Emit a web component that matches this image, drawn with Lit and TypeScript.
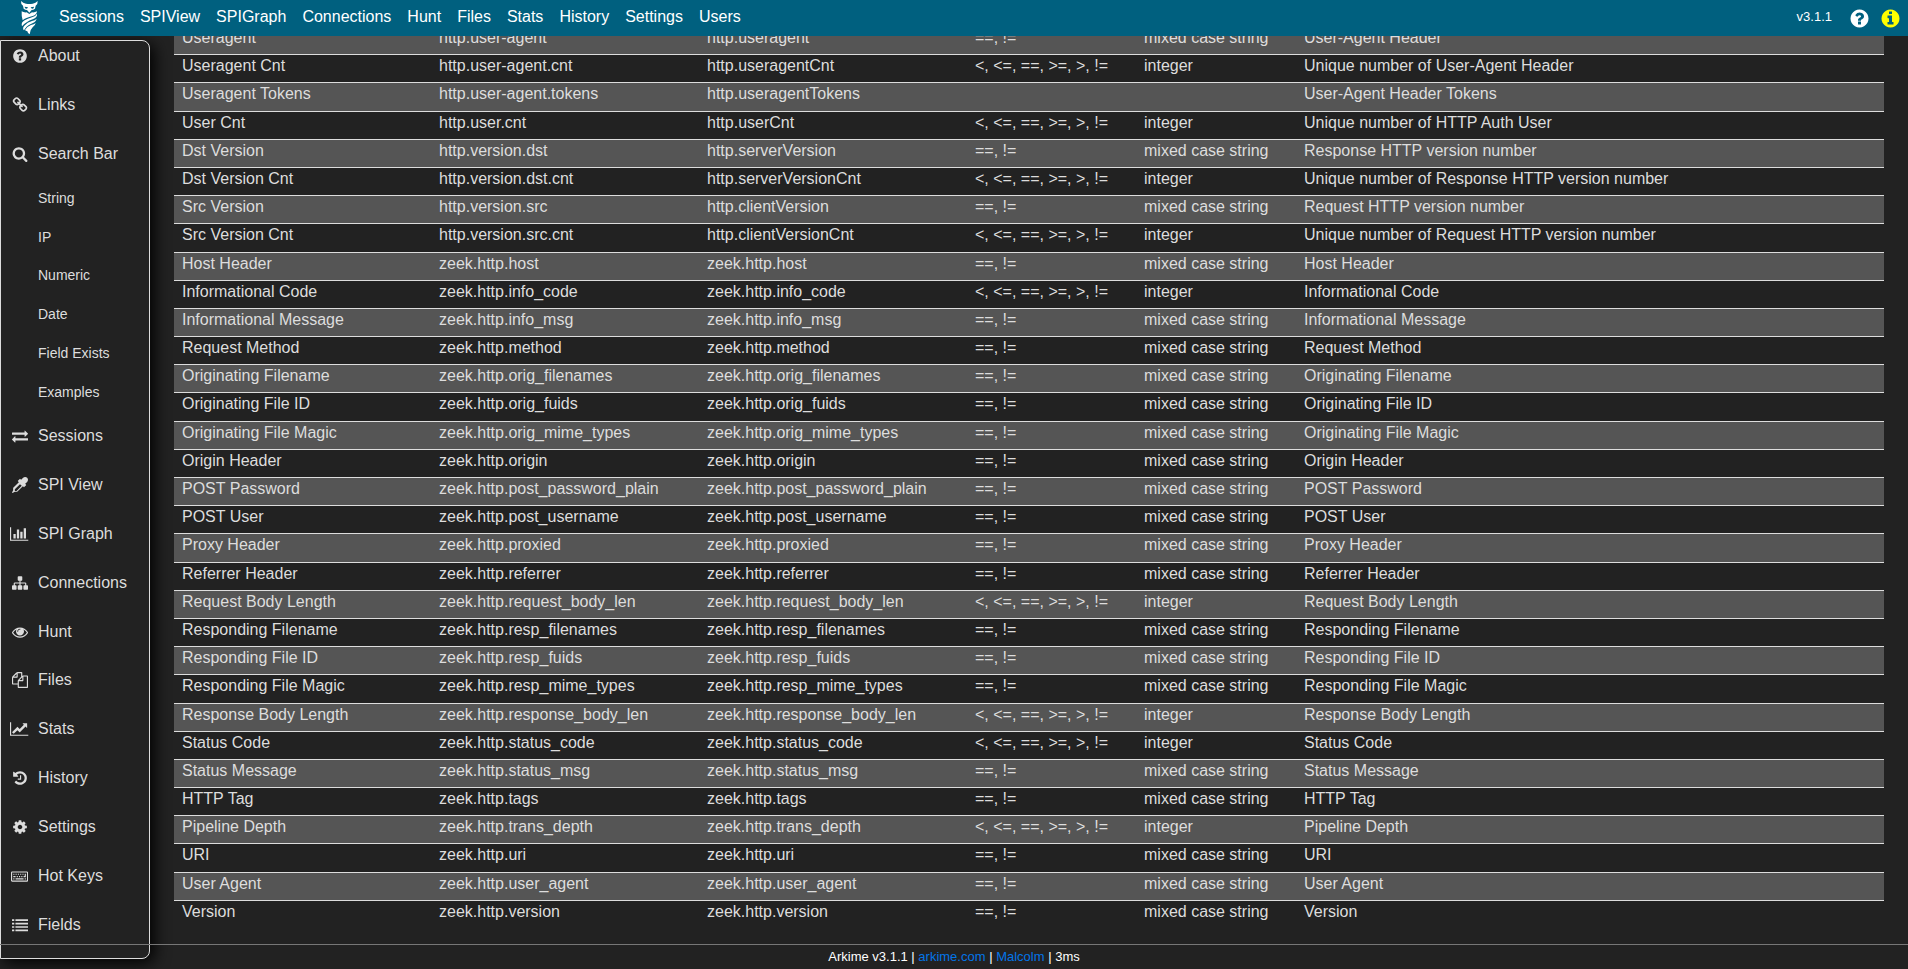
import { LitElement, html, svg, css, TemplateResult } from "lit";
import { customElement, property } from "lit/decorators.js";

interface Icon { width: number; d: string; }

const ICONS: Record<string, Icon> = {
  help: { width: 1792, d: "M1024 1376v-192q0-14-9-23t-23-9h-192q-14 0-23 9t-9 23v192q0 14 9 23t23 9h192q14 0 23-9t9-23zm256-672q0-88-55.5-163t-138.5-116-170-41q-243 0-371 213-15 24 8 42l132 100q7 6 19 6 16 0 25-12 53-68 86-92 34-24 86-24 48 0 85.5 26t37.5 59q0 38-20 61t-68 45q-63 28-115.5 86.5t-52.5 125.5v36q0 14 9 23t23 9h192q14 0 23-9t9-23q0-19 21.5-49.5t54.5-49.5q32-18 49-28.5t46-35 44.5-48 28-60.5 12.5-81zm384 192q0 209-103 385.5t-279.5 279.5-385.5 103-385.5-103-279.5-279.5-103-385.5 103-385.5 279.5-279.5 385.5-103 385.5 103 279.5 279.5 103 385.5z" },
  info: { width: 1792, d: "M1152 1376v-160q0-14-9-23t-23-9h-96v-512q0-14-9-23t-23-9h-320q-14 0-23 9t-9 23v160q0 14 9 23t23 9h96v320h-96q-14 0-23 9t-9 23v160q0 14 9 23t23 9h448q14 0 23-9t9-23zm-128-896v-160q0-14-9-23t-23-9h-192q-14 0-23 9t-9 23v160q0 14 9 23t23 9h192q14 0 23-9t9-23zm640 416q0 209-103 385.5t-279.5 279.5-385.5 103-385.5-103-279.5-279.5-103-385.5 103-385.5 279.5-279.5 385.5-103 385.5 103 279.5 279.5 103 385.5z" },
  search: { width: 1792, d: "M1216 832q0-185-131.5-316.5t-316.5-131.5-316.5 131.5-131.5 316.5 131.5 316.5 316.5 131.5 316.5-131.5 131.5-316.5zm512 832q0 52-38 90t-90 38q-54 0-90-38l-343-342q-179 124-399 124-143 0-273.5-55.5t-225-150-150-225-55.5-273.5 55.5-273.5 150-225 225-150 273.5-55.5 273.5 55.5 225 150 150 225 55.5 273.5q0 220-124 399l343 343q37 37 37 90z" },
  link: { width: 1792, d: "M1520 1216q0-40-28-68l-208-208q-28-28-68-28-42 0-72 32 3 3 19 18.5t21.5 21.5 15 19 13 25.5 3.5 27.5q0 40-28 68t-68 28q-15 0-27.5-3.5t-25.5-13-19-15-21.5-21.5-18.5-19q-33 31-33 73 0 40 28 68l206 207q27 27 68 27 40 0 68-26l147-146q28-28 28-67zm-703-705q0-40-28-68l-206-207q-28-28-68-28-39 0-68 27l-147 146q-28 28-28 67 0 40 28 68l208 208q27 27 68 27 42 0 72-31-3-3-19-18.5t-21.5-21.5-15-19-13-25.5-3.5-27.5q0-40 28-68t68-28q15 0 27.5 3.5t25.5 13 19 15 21.5 21.5 18.5 19q33-31 33-73zm895 705q0 120-85 203l-147 146q-83 83-203 83-121 0-204-85l-206-207q-83-83-83-203 0-123 88-209l-88-88q-86 88-208 88-120 0-204-84l-208-208q-84-84-84-204t85-203l147-146q83-83 203-83 121 0 204 85l206 207q83 83 83 203 0 123-88 209l88 88q86-88 208-88 120 0 204 84l208 208q84 84 84 204z" },
  exchange: { width: 1792, d: "M1792 1184v192q0 13-9.5 22.5t-22.5 9.5h-1376v192q0 13-9.5 22.5t-22.5 9.5q-12 0-24-10l-319-320q-9-9-9-22 0-14 9-23l320-320q9-9 23-9 13 0 22.5 9.5t9.5 22.5v192h1376q13 0 22.5 9.5t9.5 22.5zm0-544q0 14-9 23l-320 320q-9 9-23 9-13 0-22.5-9.5t-9.5-22.5v-192h-1376q-13 0-22.5-9.5t-9.5-22.5v-192q0-13 9.5-22.5t22.5-9.5h1376v-192q0-14 9-23t23-9q12 0 24 10l319 319q9 9 9 23z" },
  dropper: { width: 1792, d: "M1698 94q94 94 94 226.5t-94 225.5l-225 223 104 104q10 10 10 23t-10 23l-210 210q-10 10-23 10t-23-10l-105-105-603 603q-37 37-90 37h-203l-256 128-64-64 128-256v-203q0-53 37-90l603-603-105-105q-10-10-10-23t10-23l210-210q10-10 23-10t23 10l104 104 223-225q93-94 225.5-94t226.5 94zm-1186 1474l576-576-192-192-576 576v192h192z" },
  bars: { width: 2048, d: "M640 896v512h-256v-512h256zm384-512v1024h-256v-1024h256zm1024 1152v128h-2048v-1536h128v1408h1920zm-640-896v768h-256v-768h256zm384-384v1152h-256v-1152h256z" },
  sitemap: { width: 1792, d: "M1792 1248v320q0 40-28 68t-68 28h-320q-40 0-68-28t-28-68v-320q0-40 28-68t68-28h96v-192h-512v192h96q40 0 68 28t28 68v320q0 40-28 68t-68 28h-320q-40 0-68-28t-28-68v-320q0-40 28-68t68-28h96v-192h-512v192h96q40 0 68 28t28 68v320q0 40-28 68t-68 28h-320q-40 0-68-28t-28-68v-320q0-40 28-68t68-28h96v-192q0-52 38-90t90-38h512v-192h-96q-40 0-68-28t-28-68v-320q0-40 28-68t68-28h320q40 0 68 28t28 68v320q0 40-28 68t-68 28h-96v192h512q52 0 90 38t38 90v192h96q40 0 68 28t28 68z" },
  eye: { width: 1792, d: "M1664 960q-152-236-381-353 61 104 61 225 0 185-131.5 316.5t-316.5 131.5-316.5-131.5-131.5-316.5q0-121 61-225-229 117-381 353 133 205 333.5 326.5t434.5 121.5 434.5-121.5 333.5-326.5zm-720-384q0-20-14-34t-34-14q-125 0-214.5 89.5t-89.5 214.5q0 20 14 34t34 14 34-14 14-34q0-86 61-147t147-61q20 0 34-14t14-34zm848 384q0 34-20 69-140 230-376.5 368.5t-499.5 138.5-499.5-139-376.5-368q-20-35-20-69t20-69q140-229 376.5-368t499.5-139 499.5 139 376.5 368q20 35 20 69z" },
  files: { width: 1792, d: "M1696 384q40 0 68 28t28 68v1216q0 40-28 68t-68 28h-960q-40 0-68-28t-28-68v-288h-544q-40 0-68-28t-28-68v-672q0-40 20-88t48-76l408-408q28-28 76-48t88-20h416q40 0 68 28t28 68v328q68-40 128-40h416zm-544 213l-299 299h299v-299zm-640-384l-299 299h299v-299zm196 647l316-316v-416h-384v416q0 40-28 68t-68 28h-416v640h512v-256q0-40 20-88t48-76zm956 804v-1152h-384v416q0 40-28 68t-68 28h-416v640h896z" },
  trend: { width: 2048, d: "M2048 1536v128h-2048v-1536h128v1408h1920zm-128-1248v435q0 21-19.5 29.5t-35.5-7.5l-121-121-633 633q-10 10-23 10t-23-10l-233-233-416 416-192-192 585-585q10-10 23-10t23 10l233 233 464-464-121-121q-16-16-7.5-35.5t29.5-19.5h435q14 0 23 9t9 23z" },
  history: { width: 1792, d: "M1664 896q0 156-61 298t-164 245-245 164-298 61q-172 0-327-72.5t-264-204.5q-7-10-6.5-22.5t8.5-20.5l137-138q10-9 25-9 16 2 23 12 73 95 179 147t225 52q104 0 198.5-40.5t163.5-109.5 109.5-163.5 40.5-198.5-40.5-198.5-109.5-163.5-163.5-109.5-198.5-40.5q-98 0-188 35.5t-160 101.5l137 138q31 30 14 69-17 40-59 40h-448q-26 0-45-19t-19-45v-448q0-42 40-59 39-17 69 14l130 129q107-101 244.5-156.5t284.5-55.5q156 0 298 61t245 164 164 245 61 298zm-640-288v448q0 14-9 23t-23 9h-320q-14 0-23-9t-9-23v-64q0-14 9-23t23-9h224v-352q0-14 9-23t23-9h64q14 0 23 9t9 23z" },
  cog: { width: 1792, d: "M1152 896q0-106-75-181t-181-75-181 75-75 181 75 181 181 75 181-75 75-181zm512-109v222q0 12-8 23t-20 13l-185 28q-19 54-39 91 35 50 107 138 10 12 10 25t-9 23q-27 37-99 108t-94 71q-12 0-26-9l-138-108q-44 23-91 38-16 136-29 186-7 28-36 28h-222q-14 0-24.5-8.5t-11.5-21.5l-28-184q-49-16-90-37l-141 107q-10 9-25 9-14 0-25-11-126-114-165-168-7-10-7-23 0-12 8-23 15-21 51-66.5t54-70.5q-27-50-41-99l-183-27q-13-2-21-12.5t-8-23.5v-222q0-12 8-23t19-13l186-28q14-46 39-92-40-57-107-138-10-12-10-24 0-10 9-23 26-36 98.5-107.5t94.5-71.5q13 0 26 10l138 107q44-23 91-38 16-136 29-186 7-28 36-28h222q14 0 24.5 8.5t11.5 21.5l28 184q49 16 90 37l142-107q9-9 24-9 13 0 25 10 129 119 165 170 7 8 7 22 0 12-8 23-15 21-51 66.5t-54 70.5q26 50 41 98l183 28q13 2 21 12.5t8 23.5z" },
  keyboard: { width: 1920, d: "M128 384H1792Q1920 384 1920 512V1408Q1920 1536 1792 1536H128Q0 1536 0 1408V512Q0 384 128 384ZM128 512V1408H1792V512ZM256 640h128v128h-128zM512 640h128v128h-128zM768 640h128v128h-128zM1024 640h128v128h-128zM1280 640h128v128h-128zM1536 640h128v384h-256v-128h128zM256 896h256v128h-256zM640 896h128v128h-128zM896 896h128v128h-128zM1152 896h128v128h-128zM256 1152h128v128h-128zM512 1152h896v128h-896zM1536 1152h128v128h-128z" },
  list: { width: 1792, d: "M0 256h256v192H0zM384 256h1408v192H384zM0 640h256v192H0zM384 640h1408v192H384zM0 1024h256v192H0zM384 1024h1408v192H384zM0 1408h256v192H0zM384 1408h1408v192H384z" },
};

@customElement("ui-icon")
export class UiIcon extends LitElement {
  static styles = css`
    :host { display: inline-flex; justify-content: center; flex: none; width: 21px; }
    svg { display: block; height: 16px; width: auto; fill: currentColor; fill-rule: evenodd; }
    :host([large]) svg { height: 21px; }
  `;
  @property() name = "help";

  render() {
    const icon = ICONS[this.name];
    return html`<svg viewBox="0 0 ${icon.width} 1792" aria-hidden="true">${svg`<path d=${icon.d}></path>`}</svg>`;
  }
}

const NAV = ["Sessions", "SPIView", "SPIGraph", "Connections", "Hunt", "Files", "Stats", "History", "Settings", "Users"];

interface Section { label: string; icon?: string; }

const SECTIONS: Section[] = [
  { label: "About", icon: "help" },
  { label: "Links", icon: "link" },
  { label: "Search Bar", icon: "search" },
  { label: "String" },
  { label: "IP" },
  { label: "Numeric" },
  { label: "Date" },
  { label: "Field Exists" },
  { label: "Examples" },
  { label: "Sessions", icon: "exchange" },
  { label: "SPI View", icon: "dropper" },
  { label: "SPI Graph", icon: "bars" },
  { label: "Connections", icon: "sitemap" },
  { label: "Hunt", icon: "eye" },
  { label: "Files", icon: "files" },
  { label: "Stats", icon: "trend" },
  { label: "History", icon: "history" },
  { label: "Settings", icon: "cog" },
  { label: "Hot Keys", icon: "keyboard" },
  { label: "Fields", icon: "list" },
];

const TEXT = { ops: "==, !=", type: "mixed case string" };
const INT = { ops: "<, <=, ==, >=, >, !=", type: "integer" };
const NONE = { ops: "", type: "" };

type Kind = typeof TEXT;
type Field = [name: string, expression: string, db: string, kind: Kind, help: string];

const zeek = (name: string, key: string, kind: Kind = TEXT): Field =>
  [name, `zeek.http.${key}`, `zeek.http.${key}`, kind, name];

const FIELDS: Field[] = [
  ["Useragent", "http.user-agent", "http.useragent", TEXT, "User-Agent Header"],
  ["Useragent Cnt", "http.user-agent.cnt", "http.useragentCnt", INT, "Unique number of User-Agent Header"],
  ["Useragent Tokens", "http.user-agent.tokens", "http.useragentTokens", NONE, "User-Agent Header Tokens"],
  ["User Cnt", "http.user.cnt", "http.userCnt", INT, "Unique number of HTTP Auth User"],
  ["Dst Version", "http.version.dst", "http.serverVersion", TEXT, "Response HTTP version number"],
  ["Dst Version Cnt", "http.version.dst.cnt", "http.serverVersionCnt", INT, "Unique number of Response HTTP version number"],
  ["Src Version", "http.version.src", "http.clientVersion", TEXT, "Request HTTP version number"],
  ["Src Version Cnt", "http.version.src.cnt", "http.clientVersionCnt", INT, "Unique number of Request HTTP version number"],
  zeek("Host Header", "host"),
  zeek("Informational Code", "info_code", INT),
  zeek("Informational Message", "info_msg"),
  zeek("Request Method", "method"),
  zeek("Originating Filename", "orig_filenames"),
  zeek("Originating File ID", "orig_fuids"),
  zeek("Originating File Magic", "orig_mime_types"),
  zeek("Origin Header", "origin"),
  zeek("POST Password", "post_password_plain"),
  zeek("POST User", "post_username"),
  zeek("Proxy Header", "proxied"),
  zeek("Referrer Header", "referrer"),
  zeek("Request Body Length", "request_body_len", INT),
  zeek("Responding Filename", "resp_filenames"),
  zeek("Responding File ID", "resp_fuids"),
  zeek("Responding File Magic", "resp_mime_types"),
  zeek("Response Body Length", "response_body_len", INT),
  zeek("Status Code", "status_code", INT),
  zeek("Status Message", "status_msg"),
  zeek("HTTP Tag", "tags"),
  zeek("Pipeline Depth", "trans_depth", INT),
  zeek("URI", "uri"),
  zeek("User Agent", "user_agent"),
  zeek("Version", "version"),
];

@customElement("app-root")
export class AppRoot extends LitElement {
  static styles = css`
    :host {
      display: grid;
      grid-template-columns: 150px minmax(0, 1fr);
      grid-template-rows: 36px minmax(0, 1fr) 25px;
      height: 100vh;
      overflow: hidden;
      background: #222;
      color: #ddd;
      font: 16px/24px "Liberation Sans", Arial, sans-serif;
    }
    a { color: inherit; text-decoration: none; }

    .navbar {
      grid-column: 1 / -1;
      z-index: 2;
      display: flex;
      align-items: center;
      padding: 0 7px 0 20px;
      background: #00607f;
      color: #fff;
    }
    .logo { display: block; width: 20px; height: 34px; margin-right: 11px; fill: #fff; fill-rule: evenodd; }
    .tabs { display: flex; flex: 1; margin-bottom: 3px; }
    .tab { padding: 0 8px; }
    .navbar-end { display: flex; align-items: center; gap: 10px; }
    .version { margin: 0 7px 3px 0; font-size: 13px; }
    .hint { display: flex; color: #fff; }
    .hint.alert { color: #ff0; }

    .sidebar {
      grid-column: 1;
      grid-row: 2 / 4;
      z-index: 1;
      display: flex;
      flex-direction: column;
      justify-content: space-between;
      margin: 4px 0 10px;
      padding: 0 8px 18px;
      border: 1px solid #ddd;
      border-radius: 0 8px 8px 0;
      background: #222;
      box-shadow: 4px 4px 16px #000;
    }
    .section { display: flex; align-items: center; gap: 8px; height: 30px; }
    .subsection { height: 20px; padding-left: 29px; font-size: 14px; line-height: 20px; }

    .content {
      grid-column: 2;
      grid-row: 2;
      display: flex;
      flex-direction: column;
      justify-content: flex-end;
      overflow: hidden;
      padding: 0 24px 16px;
    }
    .fields {
      flex: none;
      width: 100%;
      height: calc(100% + 10px);
      border-collapse: separate;
      border-spacing: 0;
      table-layout: fixed;
      line-height: 22px;
    }
    .col-name { width: 257px; }
    .col-expression, .col-db { width: 268px; }
    .col-ops { width: 169px; }
    .col-type { width: 160px; }
    .cell { padding: 0 8px; border-top: 1px solid #ddd; vertical-align: top; white-space: nowrap; }
    .field:nth-child(odd) { background: #555; }

    .footer {
      grid-column: 1 / -1;
      grid-row: 3;
      z-index: 2;
      border-top: 1px solid #777;
      color: #fff;
      font-size: 13px;
      line-height: 24px;
      text-align: center;
    }
    .footer-link { color: #0275e8; }
  `;

  private renderSection(s: Section): TemplateResult {
    return s.icon
      ? html`<a class="section" href="#"><ui-icon name=${s.icon}></ui-icon><span>${s.label}</span></a>`
      : html`<a class="subsection" href="#">${s.label}</a>`;
  }

  render() {
    return html`
      <nav class="navbar">
        <svg class="logo" viewBox="0 0 60 102" aria-hidden="true">
          <path d="M3 0Q9 7 18 8Q28 10 38 8Q47 7 53 0Q54 9 47 14L45 23Q40 27 35 27L28 35L21 27Q16 27 11 23L9 14Q2 9 3 0ZM14 17Q14 23 19 23Q23 23 24 19ZM42 17Q42 23 37 23Q33 23 32 19Z"></path>
          <path d="M5 31Q11 35 20 34L28 39L36 34Q44 35 51 31Q51 41 38 45Q16 50 8 58Q4 46 5 31Z"></path>
          <path d="M51 38Q53 49 38 55Q18 62 6 76Q2 64 14 58Q22 53 36 49Q47 46 51 38Z"></path>
          <path d="M50 53Q48 63 34 68Q18 75 12 88Q6 82 13 74Q22 64 36 60Q45 58 50 53Z"></path>
          <path d="M47 66Q46 73 38 79Q30 86 29 100Q23 97 22 91Q17 90 15 87Q20 77 33 72Q42 70 47 66Z"></path>
        </svg>
        <div class="tabs">${NAV.map((t) => html`<a class="tab" href="#">${t}</a>`)}</div>
        <div class="navbar-end">
          <span class="version">v3.1.1</span>
          <a class="hint" href="#" aria-label="Help"><ui-icon name="help" large></ui-icon></a>
          <a class="hint alert" href="#" aria-label="Information"><ui-icon name="info" large></ui-icon></a>
        </div>
      </nav>
      <nav class="sidebar">${SECTIONS.map((s) => this.renderSection(s))}</nav>
      <main class="content">
        <table class="fields">
          <colgroup>
            <col class="col-name" /><col class="col-expression" /><col class="col-db" />
            <col class="col-ops" /><col class="col-type" /><col />
          </colgroup>
          <tbody>
            ${FIELDS.map(([name, expression, db, kind, help]) => html`
              <tr class="field">
                <td class="cell">${name}</td>
                <td class="cell">${expression}</td>
                <td class="cell">${db}</td>
                <td class="cell">${kind.ops}</td>
                <td class="cell">${kind.type}</td>
                <td class="cell">${help}</td>
              </tr>`)}
          </tbody>
        </table>
      </main>
      <footer class="footer">
        Arkime v3.1.1 | <a class="footer-link" href="#">arkime.com</a> |
        <a class="footer-link" href="#">Malcolm</a> | 3ms
      </footer>
    `;
  }
}
